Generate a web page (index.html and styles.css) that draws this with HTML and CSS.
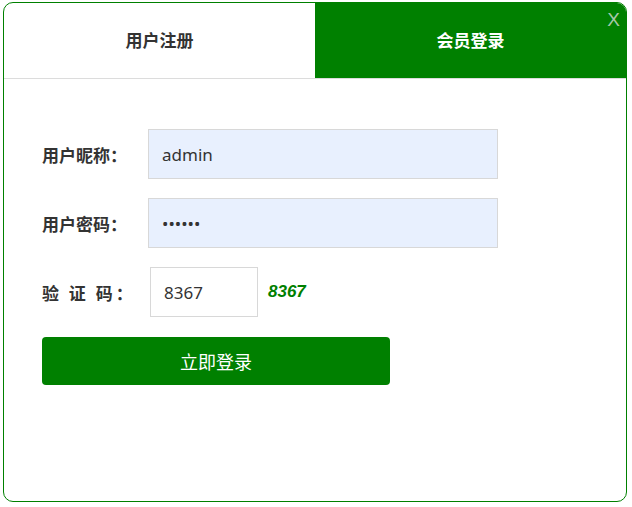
FILE: index.html
```html
<!DOCTYPE html>
<html lang="zh-CN">
<head>
    <meta charset="UTF-8">
    <meta name="viewport" content="width=device-width, initial-scale=1.0">
    <title>会员登录</title>
    <link rel="stylesheet" href="styles.css">
</head>
<body>
    <div class="modal">
        <div class="tabs">
            <div class="tab">用户注册</div>
            <div class="tab active">会员登录</div>
        </div>
        <span class="close">X</span>

        <form class="login-form">
            <div class="form-row">
                <label for="nick">用户昵称：</label>
                <input type="text" id="nick" class="field filled" value="admin">
            </div>
            <div class="form-row">
                <label for="pwd">用户密码：</label>
                <input type="password" id="pwd" class="field filled" value="123456">
            </div>
            <div class="form-row">
                <label for="code" class="spaced">验 证 码：</label>
                <input type="text" id="code" class="field code-field" value="8367">
                <span class="code">8367</span>
            </div>
            <button type="submit" class="submit">立即登录</button>
        </form>
    </div>
</body>
</html>
```

FILE: styles.css
```css
:root {
    --green: #008000;
    --text: #333333;
    --line: #dcdcdc;
}

body {
    margin: 0;
    padding: 2px 0 0 3px;
    background: #ffffff;
    font-family: "Noto Sans", "Noto Sans CJK SC", sans-serif;
    color: var(--text);
}

.modal {
    width: 622px;
    height: 498px;
    border: 1px solid var(--green);
    border-radius: 10px;
    overflow: hidden;
    position: relative;
    background: #fff;
}

.tabs {
    display: flex;
    border-bottom: 1px solid var(--line);
}

.tab {
    flex: 1;
    height: 75px;
    display: flex;
    align-items: center;
    justify-content: center;
    padding-bottom: 3px;
    box-sizing: border-box;
    font-family: "Noto Sans CJK SC", sans-serif;
    font-size: 17px;
    font-weight: bold;
    color: #333;
}

.tab.active {
    background: var(--green);
    color: #fff;
}

.close {
    position: absolute;
    top: 6px;
    right: 6px;
    font-family: "Liberation Sans", sans-serif;
    font-size: 19px;
    color: #a8c8a8;
}

.login-form {
    padding: 50px 0 0 38px;
}

.form-row {
    display: flex;
    align-items: center;
    margin-bottom: 19px;
}

.form-row label {
    width: 106px;
    font-family: "Noto Sans CJK SC", sans-serif;
    font-size: 17px;
    font-weight: bold;
    color: #333;
}

.form-row label.spaced {
    letter-spacing: 3px;
}

.field {
    box-sizing: border-box;
    height: 50px;
    padding: 0 13px;
    border: 1px solid #d8d8d8;
    font-family: "Noto Sans", "Noto Sans CJK SC", sans-serif;
    font-size: 17px;
    color: var(--text);
    outline: none;
}

.filled {
    width: 350px;
    background: #e8f0fe;
}

.code-field {
    width: 108px;
    margin-left: 2px;
    background: #fff;
}

.code {
    margin-left: 10px;
    font-family: "Liberation Sans", sans-serif;
    font-size: 17px;
    font-weight: bold;
    font-style: italic;
    color: var(--green);
}

.submit {
    width: 348px;
    height: 48px;
    margin-top: 1px;
    border: none;
    border-radius: 4px;
    background: var(--green);
    color: #fff;
    font-family: "Noto Sans CJK SC", sans-serif;
    font-size: 18px;
    cursor: pointer;
}
```
